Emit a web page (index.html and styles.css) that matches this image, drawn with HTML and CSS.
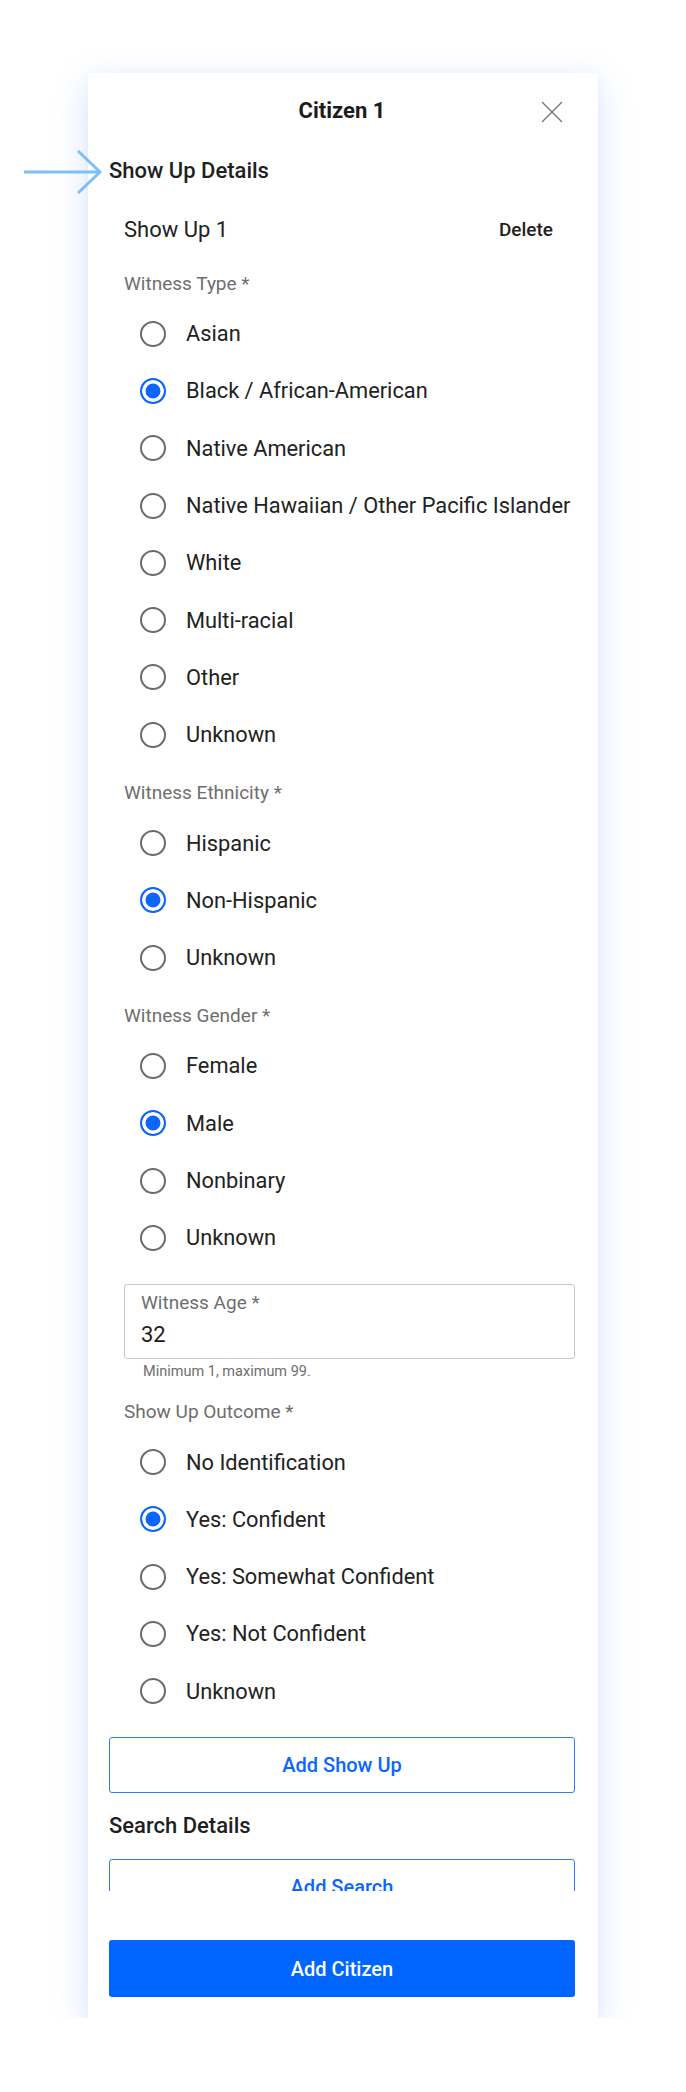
FILE: index.html
```html
<!DOCTYPE html>
<html lang="en">
<head>
<meta charset="utf-8">
<title>Citizen 1</title>
<link rel="stylesheet" href="styles.css">
</head>
<body>
<div class="card">
  <svg class="pointer" width="84" height="46" viewBox="0 0 84 46" aria-hidden="true">
    <path d="M2 23 H78 M56 2 L78 23 L56 44" fill="none" stroke="#7cc0f7" stroke-width="3"/>
  </svg>
  <header class="header">
    <span></span>
    <h1 class="title">Citizen 1</h1>
    <button class="close" aria-label="Close">
      <svg width="22" height="22" viewBox="0 0 22 22"><path d="M1 1 L21 21 M21 1 L1 21" stroke="#777" stroke-width="1.4" fill="none"/></svg>
    </button>
  </header>
  <div class="body">
    <h2 class="section-title">Show Up Details</h2>
    <div class="showup">
      <div class="showup-head">
        <span class="showup-name">Show Up 1</span>
        <span class="delete">Delete</span>
      </div>

      <div class="field-label first">Witness Type *</div>
      <div class="radios">
        <div class="radio"><span class="dot"></span><span>Asian</span></div>
        <div class="radio"><span class="dot on"></span><span>Black / African-American</span></div>
        <div class="radio"><span class="dot"></span><span>Native American</span></div>
        <div class="radio"><span class="dot"></span><span>Native Hawaiian / Other Pacific Islander</span></div>
        <div class="radio"><span class="dot"></span><span>White</span></div>
        <div class="radio"><span class="dot"></span><span>Multi-racial</span></div>
        <div class="radio"><span class="dot"></span><span>Other</span></div>
        <div class="radio"><span class="dot"></span><span>Unknown</span></div>
      </div>

      <div class="field-label">Witness Ethnicity *</div>
      <div class="radios">
        <div class="radio"><span class="dot"></span><span>Hispanic</span></div>
        <div class="radio"><span class="dot on"></span><span>Non-Hispanic</span></div>
        <div class="radio"><span class="dot"></span><span>Unknown</span></div>
      </div>

      <div class="field-label">Witness Gender *</div>
      <div class="radios">
        <div class="radio"><span class="dot"></span><span>Female</span></div>
        <div class="radio"><span class="dot on"></span><span>Male</span></div>
        <div class="radio"><span class="dot"></span><span>Nonbinary</span></div>
        <div class="radio"><span class="dot"></span><span>Unknown</span></div>
      </div>

      <div class="input-box">
        <div class="input-label">Witness Age *</div>
        <div class="input-value">32</div>
      </div>
      <div class="hint">Minimum 1, maximum 99.</div>

      <div class="field-label after-hint">Show Up Outcome *</div>
      <div class="radios">
        <div class="radio"><span class="dot"></span><span>No Identification</span></div>
        <div class="radio"><span class="dot on"></span><span>Yes: Confident</span></div>
        <div class="radio"><span class="dot"></span><span>Yes: Somewhat Confident</span></div>
        <div class="radio"><span class="dot"></span><span>Yes: Not Confident</span></div>
        <div class="radio"><span class="dot"></span><span>Unknown</span></div>
      </div>
    </div>
    <button class="btn-outline add-showup">Add Show Up</button>
    <h2 class="section-title search-title">Search Details</h2>
    <button class="btn-outline">Add Search</button>
  </div>
  <footer class="footer">
    <button class="btn-primary">Add Citizen</button>
  </footer>
</div>
</body>
</html>
```

FILE: styles.css
```css
* { box-sizing: border-box; }

html, body {
  margin: 0;
  padding: 0;
  background: #ffffff;
}

body {
  font-family: Roboto, "Liberation Sans", Arial, sans-serif;
  color: #212121;
  padding-top: 73px;
  padding-left: 88px;
}

.card {
  position: relative;
  width: 510px;
  height: 1945px;
  background: #ffffff;
  display: flex;
  flex-direction: column;
  padding: 0 23px 21px 21px;
  box-shadow: 0 10px 34px rgba(60, 120, 255, 0.20), 0 0 6px rgba(60, 120, 255, 0.06);
}

.pointer {
  position: absolute;
  left: -66px;
  top: 76px;
}

.header {
  height: 76px;
  flex: 0 0 76px;
  display: grid;
  grid-template-columns: 1fr auto 1fr;
  align-items: center;
}

.title {
  margin: 0;
  font-size: 22px;
  line-height: 24px;
  font-weight: 700;
  color: #1c1c1c;
}

.close {
  justify-self: end;
  margin-right: 12px;
  width: 22px;
  height: 22px;
  padding: 0;
  border: 0;
  background: none;
  display: flex;
  margin-top: 2px;
}

.body {
  flex: 1 1 auto;
  overflow: hidden;
  display: flex;
  flex-direction: column;
}

.section-title {
  margin: 10px 0 0;
  font-size: 22px;
  line-height: 24px;
  font-weight: 500;
  color: #1f1f1f;
}

.showup {
  padding-left: 15px;
  display: flex;
  flex-direction: column;
}

.showup-head {
  margin-top: 34px;
  display: flex;
  justify-content: space-between;
  align-items: center;
  height: 24px;
  padding-right: 22px;
}

.showup-name {
  font-size: 22px;
  font-weight: 400;
  color: #222;
}

.delete {
  font-size: 19px;
  font-weight: 500;
  color: #1f1f1f;
}

.field-label {
  margin-top: 19px;
  font-size: 19px;
  line-height: 22px;
  color: #6e6e6e;
}

.field-label.first { margin-top: 32px; }
.field-label.after-hint { margin-top: 21px; }

.radios {
  margin-top: 10px;
  display: flex;
  flex-direction: column;
}

.radio {
  height: 57.3px;
  display: flex;
  align-items: center;
  font-size: 21.8px;
  color: #222;
}

.dot {
  width: 26px;
  height: 26px;
  border-radius: 50%;
  border: 2.5px solid #6b6b6b;
  margin-left: 16px;
  margin-right: 20px;
  flex: 0 0 26px;
}

.dot.on {
  border-color: #0a66ff;
  background: #0a66ff;
  box-shadow: inset 0 0 0 3.5px #ffffff;
}

.input-box {
  margin-top: 18px;
  height: 75px;
  border: 1px solid #c8c8c8;
  border-radius: 3px;
  padding: 8px 16px 11px;
}

.input-label {
  font-size: 19px;
  line-height: 20px;
  color: #6e6e6e;
}

.input-value {
  margin-top: 10px;
  font-size: 22px;
  line-height: 24px;
  color: #1c1c1c;
}

.hint {
  margin-top: 5px;
  padding-left: 19px;
  font-size: 14.5px;
  line-height: 16px;
  color: #6e6e6e;
}

.btn-outline {
  flex: 0 0 56px;
  height: 56px;
  width: 100%;
  border: 1.5px solid #2f7bff;
  border-radius: 3px;
  background: #fff;
  color: #0a66ff;
  font-family: inherit;
  font-size: 20px;
  font-weight: 500;
}

.add-showup { margin-top: 17px; }

.search-title {
  margin-top: 21px;
  margin-bottom: 21px;
}

.footer {
  flex: 0 0 106px;
  padding-top: 49px;
}

.btn-primary {
  width: 100%;
  height: 57px;
  border: 0;
  border-radius: 3px;
  background: #0066ff;
  color: #ffffff;
  font-family: inherit;
  font-size: 20px;
  font-weight: 500;
}
```
